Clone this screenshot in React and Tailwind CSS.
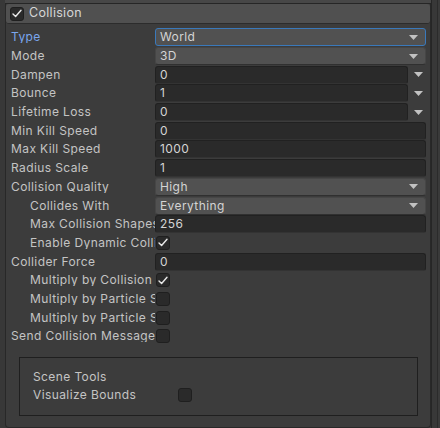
import React from 'react';

const rows = [
  { label: 'Type', kind: 'dropdown', value: 'World', focus: true },
  { label: 'Mode', kind: 'dropdown', value: '3D' },
  { label: 'Dampen', kind: 'curve', value: '0' },
  { label: 'Bounce', kind: 'curve', value: '1' },
  { label: 'Lifetime Loss', kind: 'curve', value: '0' },
  { label: 'Min Kill Speed', kind: 'field', value: '0' },
  { label: 'Max Kill Speed', kind: 'field', value: '1000' },
  { label: 'Radius Scale', kind: 'field', value: '1' },
  { label: 'Collision Quality', kind: 'dropdown', value: 'High' },
  { label: 'Collides With', kind: 'dropdown', value: 'Everything', indent: true },
  { label: 'Max Collision Shapes', kind: 'field', value: '256', indent: true },
  { label: 'Enable Dynamic Colliders', kind: 'check', checked: true, indent: true },
  { label: 'Collider Force', kind: 'field', value: '0' },
  { label: 'Multiply by Collision Angle', kind: 'check', checked: true, indent: true },
  { label: 'Multiply by Particle Speed', kind: 'check', indent: true },
  { label: 'Multiply by Particle Size', kind: 'check', indent: true },
  { label: 'Send Collision Messages', kind: 'check' },
];

function Arrow() {
  return (
    <svg width="9" height="5" viewBox="0 0 9 5" className="shrink-0">
      <path d="M0 0 H9 L4.5 5 Z" fill="#c2c2c2" />
    </svg>
  );
}

function Check({ checked }) {
  return (
    <div className="w-[14px] h-[14px] rounded-[3px] bg-[#2a2a2a] border border-[#1f1f1f] flex items-center justify-center shrink-0">
      {checked && (
        <svg width="10" height="9" viewBox="0 0 10 9">
          <path d="M1 5 L3.6 7.5 L9 1.2" stroke="#e8e8e8" strokeWidth="1.4" fill="none" strokeLinecap="round" strokeLinejoin="round" />
        </svg>
      )}
    </div>
  );
}

function Row({ r }) {
  return (
    <div className="h-[18.7px] flex items-center">
      <div
        className={`w-[149px] shrink-0 overflow-hidden whitespace-nowrap ${r.indent ? 'pl-[24px]' : 'pl-[5px]'} ${r.focus ? 'text-[#7aa6ee]' : 'text-[#c4c4c4]'}`}
      >
        {r.label}
      </div>
      {r.kind === 'dropdown' && (
        <div
          className={`w-[271px] h-[18px] rounded-[3px] bg-[#515151] flex items-center justify-between pl-[4px] pr-[7px] text-[#d4d4d4] ${r.focus ? 'border border-[#3a79bb]' : 'border border-[#464646] border-b-[#303030]'}`}
        >
          <span>{r.value}</span>
          <Arrow />
        </div>
      )}
      {r.kind === 'curve' && (
        <div className="flex items-center">
          <div className="w-[253px] h-[18px] rounded-[3px] bg-[#2a2a2a] border border-[#212121] border-b-[#333] flex items-center pl-[4px] text-[#d4d4d4]">
            {r.value}
          </div>
          <div className="w-[18px] flex justify-center pl-[2px]">
            <Arrow />
          </div>
        </div>
      )}
      {r.kind === 'field' && (
        <div className="w-[271px] h-[18px] rounded-[3px] bg-[#2a2a2a] border border-[#212121] border-b-[#333] flex items-center pl-[4px] text-[#d4d4d4]">
          {r.value}
        </div>
      )}
      {r.kind === 'check' && (
        <div className="pl-[1px]">
          <Check checked={r.checked} />
        </div>
      )}
    </div>
  );
}

export default function App() {
  return (
    <div className="w-[440px] h-[428px] bg-[#383838] flex overflow-hidden font-['Inter',sans-serif] text-[12px] tracking-[0.4px] leading-none">
      <div className="w-[431px] flex flex-col pl-[5px]">
        <div className="h-[4px] bg-[#474747] border-b border-[#262626] shrink-0" />
        <div className="flex-1 border-l border-r border-b border-[#282828] rounded-b-[4px] bg-[#3c3c3c] flex flex-col">
          <div className="h-[20px] bg-[#505050] rounded-[3px] border-b border-[#2c2c2c] flex items-center pl-[4px] gap-[5px] shrink-0">
            <Check checked />
            <span className="text-[#d6d6d6] text-[12.5px] tracking-[0.3px]">Collision</span>
          </div>
          <div className="flex flex-col pt-[4px]">
            {rows.map((r) => (
              <Row key={r.label} r={r} />
            ))}
          </div>
          <div className="mt-[11px] ml-[13px] mr-[12px] h-[59px] border border-[#1f1f1f] bg-[#3c3c3c] flex flex-col pl-[13px] pt-[13px] gap-[4px] text-[#c4c4c4]">
            <div className="h-[13px] flex items-center">Scene Tools</div>
            <div className="h-[14px] flex items-center">
              <span className="w-[145px]">Visualize Bounds</span>
              <Check />
            </div>
          </div>
        </div>
      </div>
      <div className="w-[9px] flex">
        <div className="w-[1px] bg-[#262626]" />
        <div className="w-[5px] bg-[#383838]" />
        <div className="w-[1px] bg-[#2b2b2b]" />
        <div className="flex-1 bg-[#3a3a3a]" />
      </div>
    </div>
  );
}
